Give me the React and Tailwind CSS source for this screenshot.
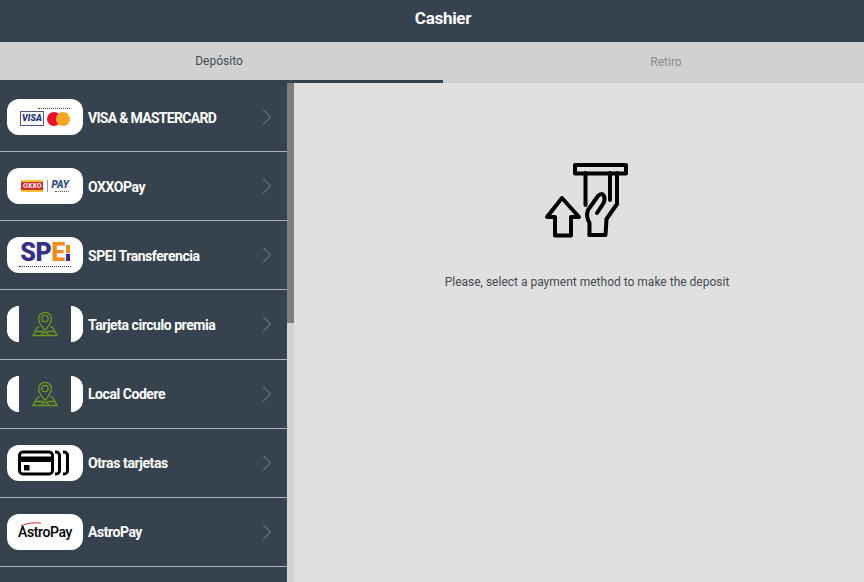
import { ChevronRight } from "lucide-react";

const CardsIcon = () => (
  <svg width="54" height="26" viewBox="0 0 54 26" fill="none" stroke="#000" strokeWidth="3">
    <rect x="1.500" y="2" width="33" height="22" rx="3.500" />
    <rect x="1.500" y="6.500" width="33" height="5.500" fill="#000" stroke="none" />
    <rect x="6" y="15" width="5.500" height="5.500" fill="#000" stroke="none" />
    <path d="M37 2h1a3.500 3.500 0 0 1 3.500 3.500v15a3.500 3.500 0 0 1-3.500 3.500h-1" />
    <path d="M45 2h1a3.500 3.500 0 0 1 3.500 3.500v15a3.500 3.500 0 0 1-3.500 3.500h-1" />
  </svg>
);

const PinIcon = () => (
  <svg width="26" height="26" viewBox="0 0 26 26" fill="none" stroke="#6a9a1e" strokeWidth="1.300">
    <path d="M13 19.500C9.500 15 6.500 12 6.500 7.800a6.500 6.500 0 0 1 13 0C19.500 12 16.500 15 13 19.500Z" />
    <circle cx="13" cy="7.500" r="3.200" />
    <path d="M7.500 15.500 5 17 1 24.500h24L21 17l-2.500-1.500" />
    <path d="M4 20.500h6l3 1.500 3-1.500h6M9 24.500l2-3M17 24.500l-2-3" />
  </svg>
);

const VisaLogo = () => (
  <div className="flex flex-col items-end">
    <div className="mb-[2px] h-[1px] w-[32px] border-t border-dotted border-[#444]" />
    <div className="flex items-center gap-[3px]">
      <span className="flex h-[15px] w-[24px] items-center justify-center border border-[#55558a] text-[9px] font-black italic text-[#1f2f7a]">VISA</span>
      <div className="flex w-[23px]">
        <span className="h-[14px] w-[14px] rounded-full bg-[#e8112d]" />
        <span className="ml-[-5px] h-[14px] w-[14px] rounded-full bg-[#f5a623]" />
      </div>
    </div>
  </div>
);

const OxxoLogo = () => (
  <div className="flex items-center gap-[4px]">
    <span className="border-y-2 border-[#f2c230] bg-[#d8262c] px-[2px] text-[7px] leading-[8px] font-bold text-white">OXXO</span>
    <div className="flex flex-col items-end border-l border-[#8a9cb0] pl-[3px]">
      <span className="text-[10px] leading-[10px] font-black italic text-[#33507f]">PAY</span>
      <div className="mt-[1px] h-[1px] w-[14px] border-t border-dotted border-[#555]" />
    </div>
  </div>
);

const SpeiLogo = () => (
  <div className="flex flex-col items-center">
    <div className="flex items-center text-[25px] leading-[20px] font-black tracking-[-0.5px] text-[#35318a]">
      SP<span className="text-[#f08a1d]">E</span>
      <span className="ml-[1px] flex flex-col gap-[1px]">
        <span className="h-[8px] w-[4px] bg-[#f08a1d]" />
        <span className="h-[7px] w-[4px] bg-[#35318a]" />
      </span>
    </div>
    <div className="mt-[3px] h-[1px] w-[52px] border-t border-dotted border-[#333]" />
  </div>
);

const AstroLogo = () => (
  <div className="relative text-[14px] leading-[16px] font-medium tracking-[-0.4px] text-black">
    AstroPay
    <svg className="absolute left-[2px] top-[-2px]" width="22" height="5" viewBox="0 0 22 5" fill="none" stroke="#d8262c">
      <path d="M1 4Q8 0 21 1" />
    </svg>
  </div>
);

const PinBadge = () => (
  <div className="flex h-full w-full">
    <div className="w-[12px] rounded-l-xl bg-white" />
    <div className="flex flex-1 items-center justify-center bg-[#36424e]">
      <PinIcon />
    </div>
    <div className="w-[12px] rounded-r-xl bg-white" />
  </div>
);

const methods = [
  { name: "VISA & MASTERCARD", logo: <VisaLogo />, tracking: "tracking-[-0.7px]" },
  { name: "OXXOPay", logo: <OxxoLogo />, tracking: "tracking-[-0.45px]" },
  { name: "SPEI Transferencia", logo: <SpeiLogo />, tracking: "tracking-[-0.45px]" },
  { name: "Tarjeta circulo premia", logo: <PinBadge />, tracking: "tracking-[-0.45px]" },
  { name: "Local Codere", logo: <PinBadge />, tracking: "tracking-[-0.45px]" },
  { name: "Otras tarjetas", logo: <CardsIcon />, tracking: "tracking-[-0.4px]" },
  { name: "AstroPay", logo: <AstroLogo />, tracking: "tracking-[-0.45px]" },
  { name: "", logo: null },
];

const MethodRow = ({ name, logo, tracking }) => (
  <div className="flex h-[69.15px] shrink-0 items-center border-b border-[#aab4bb] pl-[7px] pr-[6px]">
    {logo && (
      <>
        <div className="flex h-[36px] w-[76px] shrink-0 items-center justify-center overflow-hidden rounded-xl bg-white">
          {logo}
        </div>
        <span className={`ml-[5px] flex-1 pt-[2px] text-[14px] font-bold text-white ${tracking}`}>{name}</span>
        <ChevronRight size={28} strokeWidth={0.8} className="text-[#8a949c]" />
      </>
    )}
  </div>
);

const AtmIcon = () => (
  <svg width="110" height="100" viewBox="2 0 110 100" fill="none" stroke="#000" strokeWidth="4" strokeLinejoin="round" strokeLinecap="round">
    <rect x="45" y="15" width="51" height="8.500" />
    <path d="M55.500 23V55M87 23V54M80 23V50" />
    <path d="M59.500 85V73Q55.500 66 58 60L68 46Q72 42 74 46Q75.500 50 73 54L67 63" />
    <path d="M87 54L76.500 69 75.500 85H59.500" />
    <path d="M32 48 17 67H25V85.500H41V67H49Z" />
  </svg>
);

export default function App() {
  return (
    <div className="flex h-[582px] flex-col overflow-hidden bg-[#e0e0e0] font-['Roboto',sans-serif]">
      <header className="flex h-[42px] shrink-0 items-center justify-center bg-[#36424e] pb-[4px] pl-[22px] text-[17px] font-bold tracking-[-0.3px] text-white">
        Cashier
      </header>
      <div className="flex h-[41px] shrink-0 bg-[#d1d1d1] text-[12px]">
        <div className="flex w-[443px] items-center justify-center border-b-[3px] border-[#36424e] pr-[5px] text-[#444b52]">
          Depósito
        </div>
        <div className="flex flex-1 items-center justify-center border-b-[1px] border-[#c8c8c8] pl-[25px] text-[#8a8a8a]">
          Retiro
        </div>
      </div>
      <div className="flex min-h-0 flex-1">
        <div className="flex w-[287px] shrink-0 flex-col overflow-hidden bg-[#36424e]">
          {methods.map((m, i) => (
            <MethodRow key={i} name={m.name} logo={m.logo} tracking={m.tracking} />
          ))}
        </div>
        <div className="flex w-[7px] shrink-0 flex-col bg-[#d3d3d3]">
          <div className="h-[240px] bg-[#7e7e7e]" />
        </div>
        <main className="flex flex-1 flex-col items-center pl-[16px] pt-[67px]">
          <AtmIcon />
          <p className="mt-[23px] text-[12px] text-[#444b52]">
            Please, select a payment method to make the deposit
          </p>
        </main>
      </div>
    </div>
  );
}
